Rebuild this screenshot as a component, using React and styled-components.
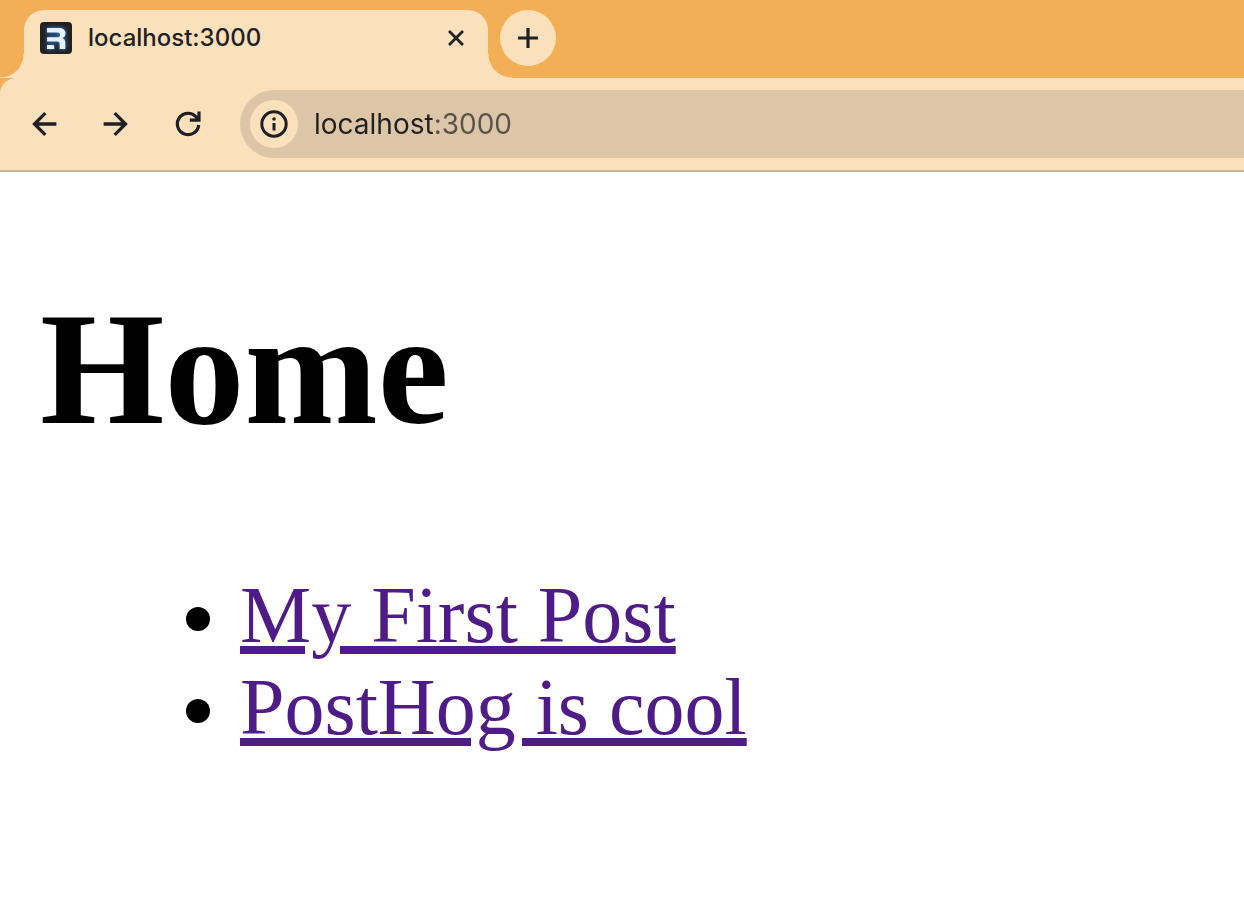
import React from "react";
import styled, { createGlobalStyle } from "styled-components";

const colors = {
  frame: "#f3af55",
  toolbar: "#fbe0bc",
  omnibox: "#ddc6a7",
  divider: "#c9b491",
  ink: "#1f2023",
  port: "#58524a",
  visited: "#4f1c87",
};

const GlobalStyle = createGlobalStyle`
  body {
    margin: 0;
    background: #fff;
  }
`;

const Browser = styled.div`
  font-family: Inter, "Liberation Sans", sans-serif;
  color: ${colors.ink};
  background: ${colors.frame};
`;

const TabStrip = styled.header`
  display: flex;
  align-items: flex-start;
  gap: 12px;
  padding: 10px 24px 0;
`;

const Tab = styled.div`
  position: relative;
  display: flex;
  align-items: center;
  gap: 16px;
  flex: 0 1 464px;
  box-sizing: border-box;
  height: 68px;
  padding: 0 16px 12px;
  border-radius: 20px 20px 0 0;
  background: ${colors.toolbar};

  &::before,
  &::after {
    content: "";
    position: absolute;
    bottom: 0;
    width: 24px;
    height: 24px;
  }
  &::before {
    right: 100%;
    background: radial-gradient(circle at 0 0, transparent 23px, ${colors.toolbar} 24px);
  }
  &::after {
    left: 100%;
    background: radial-gradient(circle at 100% 0, transparent 23px, ${colors.toolbar} 24px);
  }
`;

const TabTitle = styled.span`
  flex: 1;
  font-size: 24px;
  line-height: 32px;
  font-weight: 500;
`;

const IconButton = styled.button`
  display: flex;
  align-items: center;
  justify-content: center;
  flex: none;
  width: ${(p) => p.$size}px;
  height: ${(p) => p.$size}px;
  padding: 0;
  border: 0;
  border-radius: 50%;
  color: inherit;
  background: ${(p) => (p.$filled ? colors.toolbar : "transparent")};
`;

const Toolbar = styled.div`
  display: flex;
  align-items: center;
  gap: 16px;
  padding: 12px 0 12px 16px;
  border-bottom: 2px solid ${colors.divider};
  border-top-left-radius: 16px;
  background: ${colors.toolbar};
`;

const NavButtons = styled.nav`
  display: flex;
  gap: 16px;
  padding-right: 8px;
`;

const Omnibox = styled.div`
  display: flex;
  align-items: center;
  gap: 16px;
  flex: 1;
  box-sizing: border-box;
  height: 68px;
  padding-left: 10px;
  border-radius: 34px 0 0 34px;
  background: ${colors.omnibox};
`;

const Address = styled.input`
  flex: 1;
  min-width: 0;
  height: 40px;
  padding: 0;
  border: 0;
  outline: 0;
  font: 400 28px/40px Inter, "Liberation Sans", sans-serif;
  color: ${colors.ink};
  background: linear-gradient(to right, ${colors.ink} 120px, ${colors.port} 120px);
  background-clip: text;
  -webkit-background-clip: text;
  -webkit-text-fill-color: transparent;
`;

const Page = styled.main`
  display: flow-root;
  padding: 0 40px 80px;
  font-family: "Liberation Serif", serif;
  font-size: 80px;
  line-height: 92px;
  color: #000;
`;

const Heading = styled.h1`
  margin: 105px 0 108px;
  font-size: 160px;
  line-height: 184px;
  font-weight: 700;
`;

const PostList = styled.ul`
  margin: 0;
  padding-left: 200px;
  list-style: disc;
`;

const PostLink = styled.a`
  color: ${colors.visited};
  text-decoration: underline;
  text-decoration-thickness: 8px;
  text-underline-offset: 4px;
`;

const Favicon = styled.svg`
  flex: none;
  border-radius: 4px;
  background: #212121;

  path {
    fill: #e8f2ff;
    filter: drop-shadow(0 0 2px #3992ff);
  }
`;

const LineIcon = styled.svg.attrs({
  width: 32,
  height: 32,
  viewBox: "0 0 32 32",
  fill: "none",
  stroke: "currentColor",
})`
  flex: none;
`;

const posts = [
  { title: "My First Post", href: "#my-first-post" },
  { title: "PostHog is cool", href: "#posthog-is-cool" },
];

export default function App() {
  return (
    <>
      <GlobalStyle />
      <Browser>
        <TabStrip>
          <Tab>
            <Favicon width="32" height="32" viewBox="0 0 32 32" aria-hidden="true">
              <path d="M7 6H19C23 6 25.500 8 25.500 11.500C25.500 14 24 15.500 22 16.200C24.300 16.800 25.300 18 25.300 20.500V27H19.700V22C19.700 20.300 19 19.500 17.500 19.500H7V15.300H17.500C19.300 15.300 20 14.500 20 12.900C20 11.200 19.300 10.400 17.500 10.400H7Z" />
              <path d="M7 27V23H12.500C13.700 23 14.200 23.500 14.200 24.700V27Z" />
            </Favicon>
            <TabTitle>localhost:3000</TabTitle>
            <IconButton $size={32} aria-label="Close tab">
              <LineIcon strokeWidth="2.8">
                <path d="M9 9L23 23M23 9L9 23" />
              </LineIcon>
            </IconButton>
          </Tab>
          <IconButton $size={56} $filled aria-label="New tab">
            <LineIcon strokeWidth="3.2">
              <path d="M16 6V26M6 16H26" />
            </LineIcon>
          </IconButton>
        </TabStrip>
        <Toolbar>
          <NavButtons aria-label="Navigation">
            <IconButton $size={56} aria-label="Back">
              <LineIcon strokeWidth="3.3">
                <path d="M28.400 16H6.500M17.300 5.200L6.500 16L17.300 26.800" />
              </LineIcon>
            </IconButton>
            <IconButton $size={56} aria-label="Forward">
              <LineIcon strokeWidth="3.3">
                <path d="M3.600 16H25.500M14.700 5.200L25.500 16L14.700 26.800" />
              </LineIcon>
            </IconButton>
            <IconButton $size={56} aria-label="Reload">
              <LineIcon strokeWidth="3.2">
                <path d="M26.700 17A10.700 10.700 0 1 1 24 8.800L27 12M27 3.500V12.200H17.800" />
                <path d="M22 12L27 8V12Z" fill="currentColor" stroke="none" />
              </LineIcon>
            </IconButton>
          </NavButtons>
          <Omnibox>
            <IconButton $size={48} $filled aria-label="View site information">
              <LineIcon strokeWidth="3">
                <circle cx="16" cy="16" r="12.200" />
                <path d="M16 15V22.500" />
                <circle cx="16" cy="11" r="1.800" fill="currentColor" stroke="none" />
              </LineIcon>
            </IconButton>
            <Address type="text" aria-label="Address" defaultValue="localhost:3000" spellCheck={false} />
          </Omnibox>
        </Toolbar>
      </Browser>
      <Page>
        <Heading>Home</Heading>
        <PostList>
          {posts.map((post) => (
            <li key={post.href}>
              <PostLink href={post.href}>{post.title}</PostLink>
            </li>
          ))}
        </PostList>
      </Page>
    </>
  );
}
